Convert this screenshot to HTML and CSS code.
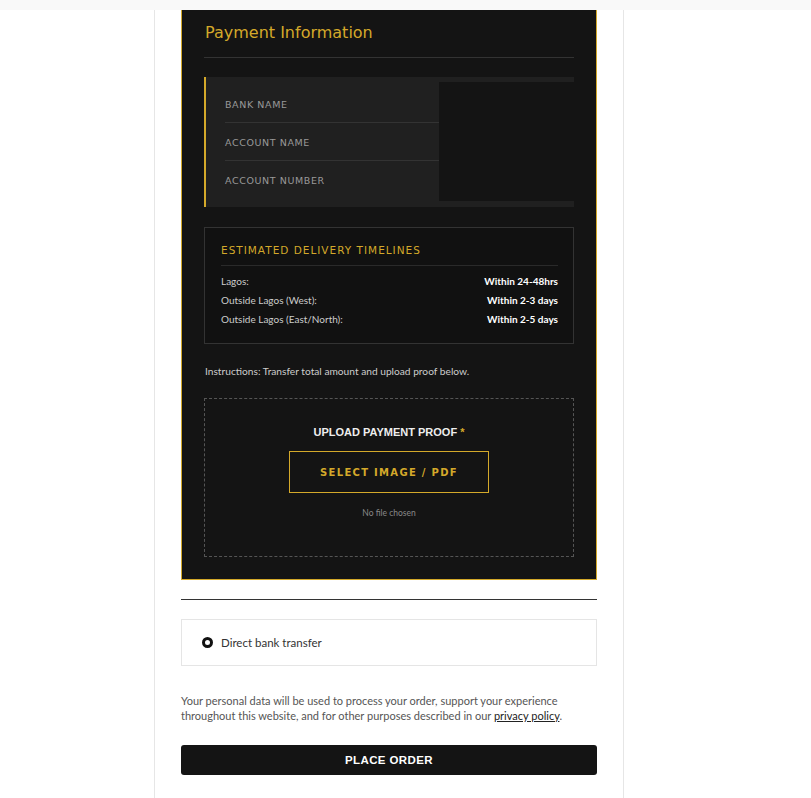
FILE: index.html
```html
<!DOCTYPE html>
<html lang="en">
<head>
    <meta charset="UTF-8">
    <title>Checkout</title>
    <link rel="stylesheet" href="styles.css">
</head>
<body>
    <div class="topbar"></div>
    <div class="page">
        <div class="checkout">
            <div class="payinfo">
                <h2 class="payinfo-title">Payment Information</h2>

                <div class="bank">
                    <div class="bank-labels">
                        <div class="bank-row">Bank Name</div>
                        <div class="bank-row">Account Name</div>
                        <div class="bank-row">Account Number</div>
                    </div>
                    <div class="bank-values"></div>
                </div>

                <div class="delivery">
                    <h3 class="delivery-title">Estimated Delivery Timelines</h3>
                    <div class="delivery-row"><span>Lagos:</span><b>Within 24-48hrs</b></div>
                    <div class="delivery-row"><span>Outside Lagos (West):</span><b>Within 2-3 days</b></div>
                    <div class="delivery-row"><span>Outside Lagos (East/North):</span><b>Within 2-5 days</b></div>
                </div>

                <p class="instructions">Instructions: Transfer total amount and upload proof below.</p>

                <div class="upload">
                    <div class="upload-label">UPLOAD PAYMENT PROOF <span class="req">*</span></div>
                    <button class="upload-btn">Select Image / PDF</button>
                    <div class="upload-file">No file chosen</div>
                </div>
            </div>

            <div class="divider"></div>

            <div class="method">
                <span class="radio"></span>
                <span>Direct bank transfer</span>
            </div>

            <p class="privacy">Your personal data will be used to process your order, support your experience throughout this website, and for other purposes described in our <a href="#">privacy policy</a>.</p>

            <button class="place-order">PLACE ORDER</button>
        </div>
    </div>
</body>
</html>
```

FILE: styles.css
```css
body {
    margin: 0;
    background-color: #fff;
    font-family: "Lato", "Open Sans", sans-serif;
}

.topbar {
    height: 10px;
    background-color: #f9f9f9;
}

.page {
    margin-left: 154px;
    width: 470px;
    min-height: 788px;
    border-left: 1px solid #e6e6e6;
    border-right: 1px solid #e6e6e6;
    padding: 0 26px;
    box-sizing: border-box;
}

.payinfo {
    background-color: #141414;
    border: 1px solid #d4a92a;
    border-top: none;
    padding: 0 22px 22px 22px;
}

.payinfo-title {
    margin: 0;
    padding: 13px 0 15px 1px;
    border-bottom: 1px solid #333;
    font-family: "DejaVu Sans", sans-serif;
    font-weight: normal;
    font-size: 16px;
    color: #d4a92a;
}

.bank {
    margin-top: 19px;
    display: flex;
    background-color: #202020;
    border-left: 2px solid #d4a92a;
}

.bank-labels {
    width: 214px;
    padding: 8px 0 8px 19px;
}

.bank-row {
    height: 37px;
    line-height: 39px;
    font-family: "DejaVu Sans", sans-serif;
    font-size: 9.5px;
    letter-spacing: 0.6px;
    text-transform: uppercase;
    color: #999;
    border-bottom: 1px solid #333;
}

.bank-row:last-child {
    border-bottom: none;
    height: 38px;
}

.bank-values {
    flex: 1;
    margin: 5px 0 6px;
    background-color: #141414;
}

.delivery {
    margin-top: 20px;
    border: 1px solid #333;
    background-color: #111;
    padding: 16px 15px 14px 16px;
}

.delivery-title {
    margin: 0 0 6px;
    padding-bottom: 9px;
    border-bottom: 1px solid #2a2a2a;
    font-family: "DejaVu Sans", sans-serif;
    font-weight: normal;
    font-size: 10.5px;
    letter-spacing: 1px;
    text-transform: uppercase;
    color: #d4a92a;
}

.delivery-row {
    display: flex;
    justify-content: space-between;
    height: 19px;
    line-height: 19px;
    font-size: 10px;
    color: #ccc;
}

.delivery-row b {
    color: #fff;
}

.instructions {
    margin: 21px 0 21px 1px;
    font-size: 10.2px;
    color: #ccc;
}

.upload {
    border: 1px dashed #555;
    text-align: center;
    padding: 27px 0 38px;
}

.upload-label {
    font-family: "Liberation Sans", sans-serif;
    font-weight: bold;
    font-size: 11px;
    color: #eee;
}

.upload-label .req {
    color: #d4a92a;
}

.upload-btn {
    margin-top: 13px;
    width: 200px;
    height: 42px;
    background: transparent;
    border: 1px solid #d4a92a;
    color: #d4a92a;
    font-family: "DejaVu Sans", sans-serif;
    font-size: 10px;
    font-weight: bold;
    letter-spacing: 1.3px;
    text-transform: uppercase;
    cursor: pointer;
}

.upload-file {
    margin-top: 15px;
    font-size: 8.5px;
    color: #888;
}

.divider {
    margin-top: 19px;
    border-top: 1px solid #333;
}

.method {
    margin-top: 19px;
    height: 45px;
    border: 1px solid #e5e5e5;
    display: flex;
    align-items: center;
    padding-left: 20px;
    font-size: 11.5px;
    color: #333;
}

.radio {
    width: 5px;
    height: 5px;
    border: 3px solid #111;
    border-radius: 50%;
    margin-right: 8px;
}

.privacy {
    margin: 27px 0 0;
    font-size: 11px;
    line-height: 15px;
    color: #555;
}

.privacy a {
    color: #222;
}

.place-order {
    display: block;
    width: 100%;
    margin-top: 22px;
    height: 30px;
    background-color: #141414;
    border: none;
    border-radius: 3px;
    color: #fff;
    font-family: "Liberation Sans", sans-serif;
    font-weight: bold;
    font-size: 11.5px;
    letter-spacing: 0.4px;
    cursor: pointer;
}
```
